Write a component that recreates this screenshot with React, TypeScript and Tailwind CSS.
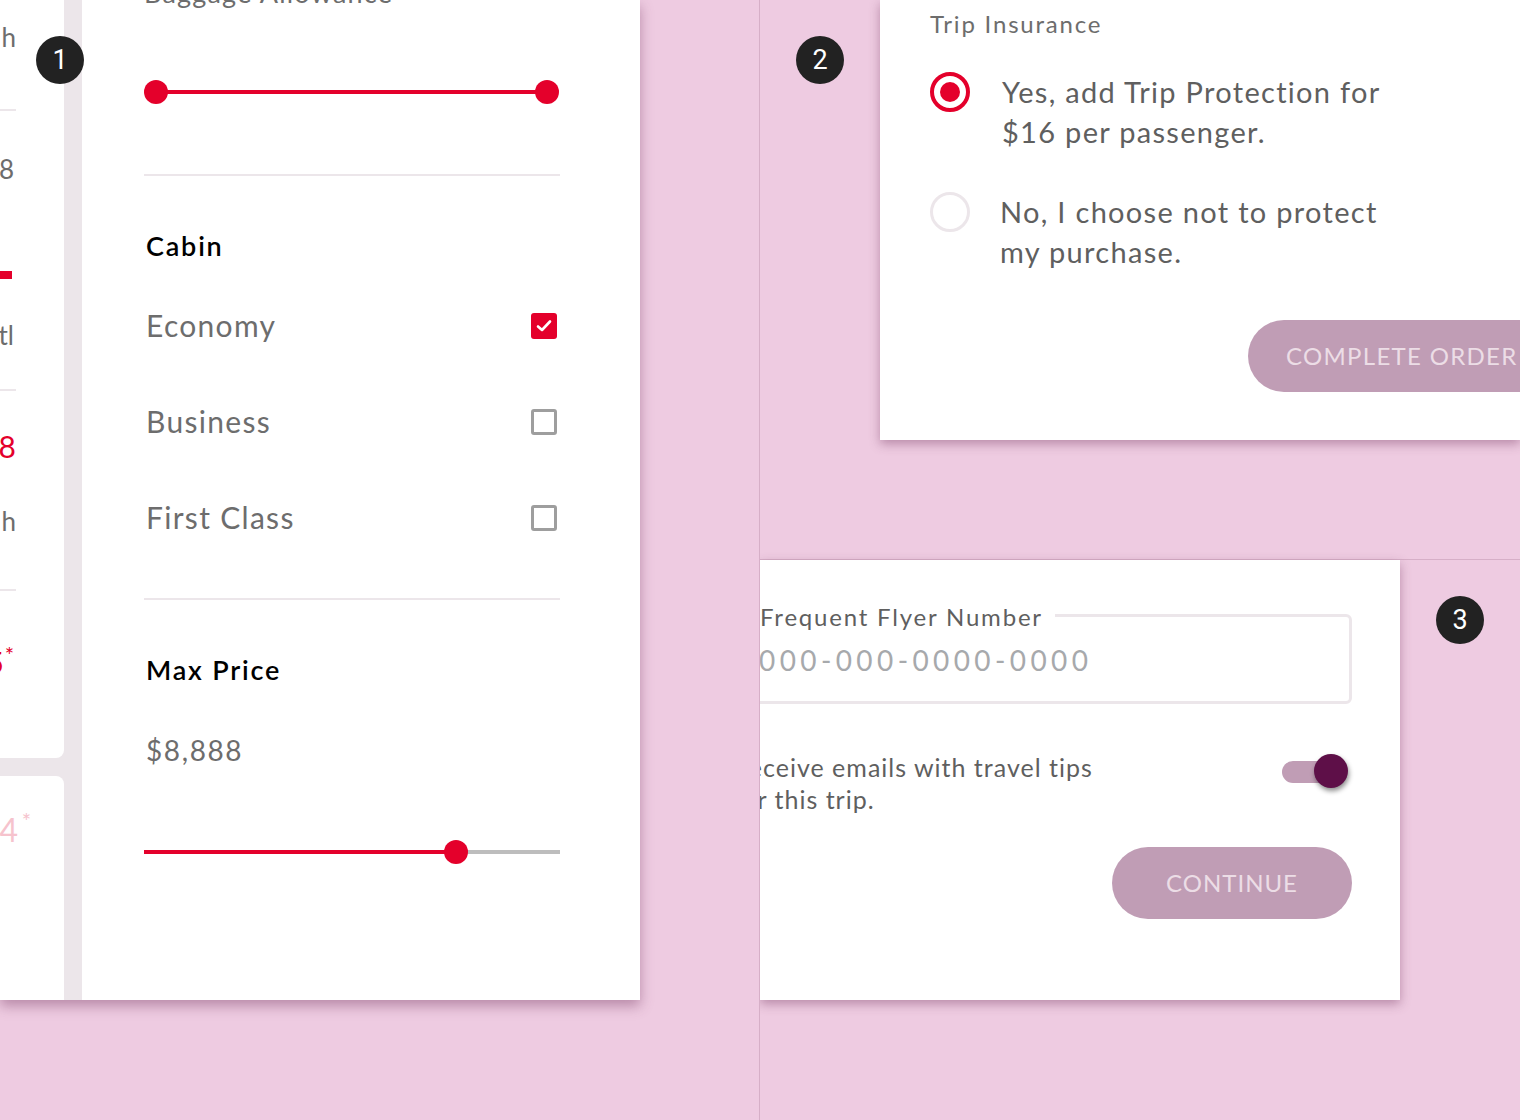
import React from "react";

const font = { fontFamily: "Lato, 'Open Sans', sans-serif" };

function Badge({ n }: { n: string }) {
  return (
    <div className="flex h-12 w-12 items-center justify-center rounded-full bg-[#222222] text-[27px] text-white" style={{ fontFamily: "Roboto, sans-serif" }}>
      {n}
    </div>
  );
}

function Checkbox({ checked }: { checked?: boolean }) {
  if (checked) {
    return (
      <div className="flex h-[26px] w-[26px] items-center justify-center rounded-[3px] bg-[#e4002b]">
        <svg width="18" height="18" viewBox="0 0 18 18">
          <path d="M3 9.5 L7 13 L15 4.5" fill="none" stroke="white" strokeWidth="2.6" strokeLinecap="round" strokeLinejoin="round" />
        </svg>
      </div>
    );
  }
  return <div className="h-[26px] w-[26px] rounded-[3px] border-[3px] border-[#9e9e9e]" />;
}

function LeftPanel() {
  return (
    <div className="relative flex h-[1000px] w-[640px] shadow-[0_6px_12px_rgba(120,60,100,0.45)]">
      {/* gray strip with partial cards */}
      <div className="flex w-[82px] flex-col gap-[18px] bg-[#ece6ea] pr-[18px]">
        <div className="relative h-[758px] overflow-hidden rounded-br-[8px] bg-white text-[26px] text-[#6d6d6d]">
          <div className="absolute right-[48px] top-[18px]">h</div>
          <div className="absolute left-0 top-[109px] h-[2px] w-[16px] bg-[#ece6ea]" />
          <div className="absolute right-[50px] top-[150px]">8</div>
          <div className="absolute left-0 top-[271px] h-[8px] w-[12px] bg-[#e4002b]" />
          <div className="absolute right-[50px] top-[316px]">tl</div>
          <div className="absolute left-0 top-[389px] h-[2px] w-[16px] bg-[#ece6ea]" />
          <div className="absolute right-[48px] top-[424px] text-[30px] text-[#e4002b]">8</div>
          <div className="absolute right-[48px] top-[502px]">h</div>
          <div className="absolute left-0 top-[589px] h-[2px] w-[16px] bg-[#ece6ea]" />
          <div className="absolute right-[60px] top-[640px] text-[30px] text-[#e4002b]">
            5<span className="absolute -right-[10px] -top-[2px] text-[22px]">*</span>
          </div>
        </div>
        <div className="relative flex-1 overflow-hidden rounded-tr-[8px] bg-white">
          <div className="absolute right-[46px] top-[30px] text-[32px] text-[#f6c3cd]">
            4<span className="absolute -right-[13px] -top-[2px] text-[22px]">*</span>
          </div>
        </div>
      </div>
      {/* white panel */}
      <div className="flex flex-1 flex-col bg-white pl-[62px] pr-[80px]">
        <div className="relative h-[176px] border-b-2 border-[#ece6ea]">
          <div className="absolute -top-[27px] left-0 text-[27px] tracking-[1.2px] text-[#6d6d6d]">Baggage Allowance</div>
          <div className="absolute left-[12px] right-[13px] top-[90px] h-[4px] bg-[#e4002b]" />
          <div className="absolute left-0 top-[80px] h-6 w-6 rounded-full bg-[#e4002b]" />
          <div className="absolute right-[1px] top-[80px] h-6 w-6 rounded-full bg-[#e4002b]" />
        </div>
        <div className="flex h-[424px] flex-col border-b-2 border-[#ece6ea] pt-[50px]">
          <div className="pl-[2px] text-[27px] font-semibold tracking-[1.8px] text-black">Cabin</div>
          <div className="mt-[44px] flex flex-col gap-[66px] pl-[2px] pr-[3px]">
            {[
              ["Economy", true],
              ["Business", false],
              ["First Class", false],
            ].map(([l, c]) => (
              <div key={l as string} className="flex h-[30px] items-center justify-between">
                <span className="text-[30px] tracking-[1.3px] text-[#6d6d6d]">{l as string}</span>
                <Checkbox checked={c as boolean} />
              </div>
            ))}
          </div>
        </div>
        <div className="flex flex-col pt-[50px]">
          <div className="pl-[2px] text-[27px] font-semibold tracking-[1.8px] text-black">Max Price</div>
          <div className="mt-[38px] pl-[2px] text-[28px] tracking-[1.6px] text-[#6d6d6d]">$8,888</div>
          <div className="relative mt-[69px] h-6">
            <div className="absolute left-0 right-0 top-[10px] h-[4px] bg-[#bdbdbd]" />
            <div className="absolute left-0 top-[10px] h-[4px] w-[312px] bg-[#e4002b]" />
            <div className="absolute left-[300px] top-0 h-6 w-6 rounded-full bg-[#e4002b]" />
          </div>
        </div>
      </div>
      <div className="absolute left-[36px] top-[36px]">
        <Badge n="1" />
      </div>
    </div>
  );
}

function Radio({ checked }: { checked?: boolean }) {
  if (checked) {
    return (
      <div className="flex h-10 w-10 shrink-0 items-center justify-center rounded-full border-4 border-[#e4002b]">
        <div className="h-5 w-5 rounded-full bg-[#e4002b]" />
      </div>
    );
  }
  return <div className="h-10 w-10 shrink-0 rounded-full border-[3px] border-[#ece6ea]" />;
}

function TopRight() {
  return (
    <div className="flex h-[560px] border-b border-[#d6afc7]">
      <div className="w-[120px] shrink-0 pl-[36px] pt-[36px]">
        <Badge n="2" />
      </div>
      <div className="h-[440px] w-[640px] shrink-0 bg-white pl-[50px] pt-[8px] shadow-[0_4px_10px_rgba(120,60,100,0.45)]">
        <div className="text-[24px] leading-[32px] tracking-[1.8px] text-[#6d6d6d]">Trip Insurance</div>
        <div className="mt-[32px] flex items-start gap-[32px]">
          <Radio checked />
          <div className="text-[29px] leading-[40px] tracking-[1.3px] text-[#5f5f5f]">
            Yes, add Trip Protection for
            <br />
            $16 per passenger.
          </div>
        </div>
        <div className="mt-[40px] flex items-start gap-[30px]">
          <Radio />
          <div className="text-[29px] leading-[40px] tracking-[1.3px] text-[#5f5f5f]">
            No, I choose not to protect
            <br />
            my purchase.
          </div>
        </div>
        <div className="mt-[48px] flex justify-end">
          <div className="-mr-[40px] flex h-[72px] w-[312px] items-center rounded-full bg-[#c09db5] pl-[38px] text-[24px] tracking-[1.3px] text-[#ecdde6]">
            COMPLETE ORDER
          </div>
        </div>
      </div>
    </div>
  );
}

function BottomRight() {
  return (
    <div className="flex h-[560px]">
      <div className="h-[440px] w-[640px] shrink-0 overflow-hidden bg-white shadow-[0_4px_10px_rgba(120,60,100,0.45)]">
        <div className="-ml-[28px] pr-[48px] pt-[54px]">
          <div className="relative h-[90px] rounded-[6px] border-[3px] border-[#ece6ea]">
            <div className="absolute -top-[18px] left-[19px] bg-white pr-[12px] pl-[6px] text-[24px] tracking-[1.8px] text-[#5f5f5f]">
              Frequent Flyer Number
            </div>
            <div className="absolute left-[24px] top-[22px] text-[28px] tracking-[4.4px] text-[#a7a9ac]">
              000-000-0000-0000
            </div>
          </div>
          <div className="mt-[47px] flex items-start justify-between pl-[1px]">
            <div className="text-[25px] leading-[32px] tracking-[1px] text-[#5f5f5f]">
              Receive emails with travel tips
              <br />
              for this trip.
            </div>
            <div className="relative mr-[2px] mt-[3px] h-[36px] w-[68px]">
              <div className="absolute left-0 right-[6px] top-[7px] h-[22px] rounded-full bg-[#c09db5]" />
              <div className="absolute right-[2px] top-0 h-[34px] w-[34px] rounded-full bg-[#5e0f48] shadow-[1px_3px_5px_rgba(0,0,0,0.45)]" />
            </div>
          </div>
          <div className="mt-[32px] flex justify-end">
            <div className="flex h-[72px] w-[240px] items-center justify-center rounded-full bg-[#c09db5] text-[24px] tracking-[1px] text-[#ecdde6]">
              CONTINUE
            </div>
          </div>
        </div>
      </div>
      <div className="pl-[36px] pt-[36px]">
        <Badge n="3" />
      </div>
    </div>
  );
}

export default function App() {
  return (
    <div className="flex h-[1120px] w-[1520px] overflow-hidden bg-[#eecbe1]" style={font}>
      <div className="w-[760px] shrink-0 border-r border-[#d6afc7]">
        <LeftPanel />
      </div>
      <div className="flex flex-1 flex-col overflow-hidden">
        <TopRight />
        <BottomRight />
      </div>
    </div>
  );
}
